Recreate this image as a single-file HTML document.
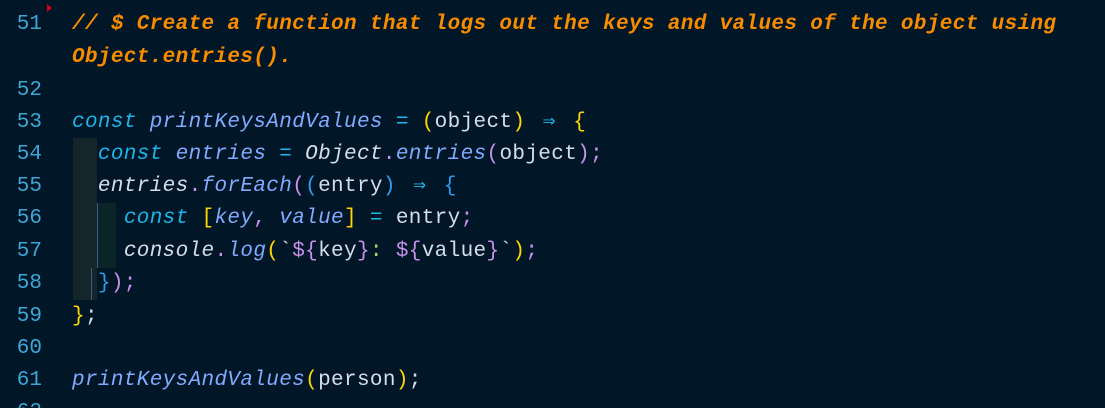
<!DOCTYPE html>
<html><head><style>
html,body{margin:0;padding:0;background:#011627;width:1105px;height:408px;overflow:hidden}
body{position:relative;font-family:"Liberation Mono",monospace;font-size:21px}
.l{position:absolute;left:72px;height:32px;line-height:32px;white-space:pre;color:#d6deeb;letter-spacing:0.35px}
.n{position:absolute;left:0;width:42px;text-align:right;height:32px;line-height:32px;color:#3fa7d6}
.c{color:#f78c00;font-style:italic;font-weight:bold}
.k{color:#1fb3e6;font-style:italic}
.f{color:#82aaff;font-style:italic}
.p{color:#ffd700}
.m{color:#c792ea}
.b{color:#2f9cf0}
.o{color:#22b7e6}
.i{font-style:italic}
.a{display:inline-block;width:22px;text-align:center}
.g{position:absolute}
</style></head><body>
<div class="g" style="left:47px;top:4px;width:0;height:0;border-top:4px solid transparent;border-bottom:4px solid transparent;border-left:5px solid #d0021b"></div>
<div class="g" style="left:73px;top:138px;width:24px;height:162px;background:#15262b"></div>
<div class="g" style="left:97px;top:203px;width:18px;height:65px;background:#0a2428;border-left:1px solid #3a5a8a"></div>
<div class="g" style="left:91px;top:268px;width:1px;height:32px;background:#3a5a8a"></div>

<div class="n" style="top:9px">51</div>
<div class="l c" style="top:9px">// $ Create a function that logs out the keys and values of the object using</div>
<div class="l c" style="top:42px">Object.entries().</div>
<div class="n" style="top:75px">52</div>
<div class="n" style="top:107px">53</div>
<div class="l" style="top:107px"><span class="k">const</span> <span class="f">printKeysAndValues</span> <span class="o">=</span> <span class="p">(</span>object<span class="p">)</span> <span class="a o">⇒</span> <span class="p">{</span></div>
<div class="n" style="top:139px">54</div>
<div class="l" style="top:139px">  <span class="k">const</span> <span class="f">entries</span> <span class="o">=</span> <span class="i">Object</span><span class="m">.</span><span class="f">entries</span><span class="m">(</span>object<span class="m">);</span></div>
<div class="n" style="top:171px">55</div>
<div class="l" style="top:171px">  <span class="i">entries</span><span class="m">.</span><span class="f">forEach</span><span class="m">(</span><span class="b">(</span>entry<span class="b">)</span> <span class="a o">⇒</span> <span class="b">{</span></div>
<div class="n" style="top:203px">56</div>
<div class="l" style="top:203px">    <span class="k">const</span> <span class="p">[</span><span class="f">key</span><span class="m">,</span> <span class="f">value</span><span class="p">]</span> <span class="o">=</span> entry<span class="m">;</span></div>
<div class="n" style="top:236px">57</div>
<div class="l" style="top:236px">    <span class="i">console</span><span class="m">.</span><span class="f">log</span><span class="p">(</span>`<span class="m">${</span>key<span class="m">}</span><span style="color:#addb67">:</span> <span class="m">${</span>value<span class="m">}</span>`<span class="p">)</span><span class="m">;</span></div>
<div class="n" style="top:268px">58</div>
<div class="l" style="top:268px">  <span class="b">}</span><span class="m">);</span></div>
<div class="n" style="top:301px">59</div>
<div class="l" style="top:301px"><span class="p">}</span>;</div>
<div class="n" style="top:333px">60</div>
<div class="n" style="top:365px">61</div>
<div class="l" style="top:365px"><span class="f">printKeysAndValues</span><span class="p">(</span>person<span class="p">)</span>;</div>
<div class="n" style="top:397px;height:11px;overflow:hidden">62</div>
</body></html>
